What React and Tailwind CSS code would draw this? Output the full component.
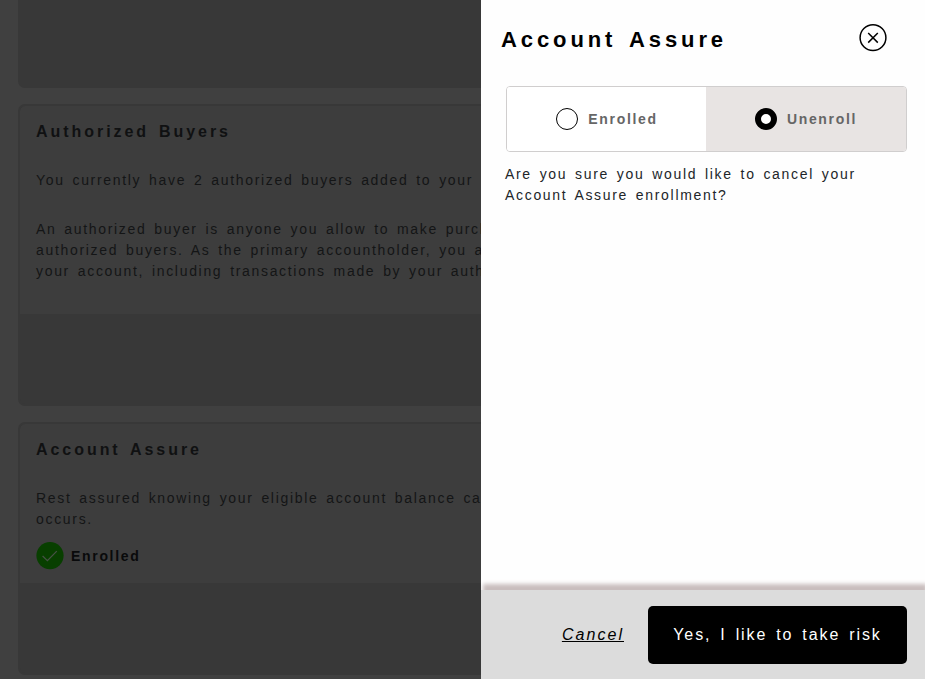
const sections = [
  {
    title: "Authorized Buyers",
    height: "h-[302px]",
    bodyHeight: "h-[208px]",
    paragraphs: [
      ["You currently have 2 authorized buyers added to your"],
      [
        "An authorized buyer is anyone you allow to make purch",
        "authorized buyers. As the primary accountholder, you a",
        "your account, including transactions made by your auth",
      ],
    ],
  },
  {
    title: "Account Assure",
    height: "h-[253px]",
    bodyHeight: "h-[159px]",
    paragraphs: [["Rest assured knowing your eligible account balance ca", "occurs."]],
    enrolled: true,
  },
];

function Section({ section }) {
  return (
    <section className={`${section.height} w-[600px] shrink-0 overflow-hidden rounded-[7px] border-2 border-[#383838] bg-[#383838]`}>
      <div className={`${section.bodyHeight} rounded-t-[5px] bg-[#3d3d3d] px-4 pt-[14px]`}>
        <h2 className="text-[16px] leading-6 font-bold tracking-[2.95px] text-[#101112] [word-spacing:2.56px]">{section.title}</h2>
        <div className="mt-[26px] flex flex-col gap-7">
          {section.paragraphs.map((lines) => (
            <p key={lines[0]}>
              {lines.map((line) => (
                <span key={line} className="block whitespace-nowrap">{line}</span>
              ))}
            </p>
          ))}
        </div>
        {section.enrolled && (
          <div className="mt-3 flex items-center gap-[7px] font-bold text-[#090a0b]">
            <svg width="28" height="28" viewBox="0 0 28 28" fill="none">
              <circle cx="14" cy="13.6" r="13.6" fill="#083f00" />
              <path d="M6.6 14 11.4 18.7 20.8 9.1" stroke="#465044" strokeWidth="1.3" />
            </svg>
            <span>Enrolled</span>
          </div>
        )}
      </div>
    </section>
  );
}

function Option({ label, selected }) {
  return (
    <label className={`flex items-center justify-center gap-[10px] font-bold text-[#666] ${selected ? "w-[200px] bg-[#e8e4e3]" : "w-[199px] bg-white pl-px"}`}>
      <span className={`size-[22px] rounded-full border-black bg-white ${selected ? "border-[6px]" : "border"}`} />
      <span>{label}</span>
    </label>
  );
}

export default function App() {
  return (
    <div className="flex h-[679px] w-[925px] overflow-hidden bg-[#404040] font-['Liberation_Sans',Arial,sans-serif] text-[14px] leading-[21px] tracking-[0.12em] [word-spacing:0.16em]">
      <main className="flex w-[481px] shrink-0 flex-col gap-4 overflow-hidden pl-[18px] text-[#141516]">
        <div className="h-[88px] w-[600px] shrink-0 rounded-b-[7px] bg-[#383838]" />
        {sections.map((section) => (
          <Section key={section.title} section={section} />
        ))}
      </main>
      <aside className="flex w-[444px] shrink-0 flex-col overflow-hidden bg-[#fefefe] text-[#212529]">
        <header className="flex h-[86px] items-start justify-between pt-6 pr-[38px] pl-5">
          <h1 className="mt-px text-[22px] leading-[30px] font-bold tracking-[3.9px] text-black [word-spacing:3.52px]">Account Assure</h1>
          <button aria-label="Close">
            <svg width="28" height="28" viewBox="0 0 28 28" fill="none" stroke="#000" strokeWidth="1.5">
              <circle cx="14" cy="13.7" r="12.9" />
              <path d="m9.2 9 9.6 9.6M18.8 9l-9.6 9.6" />
            </svg>
          </button>
        </header>
        <div className="ml-[25px] flex h-[66px] w-[401px] overflow-hidden rounded-[4px] border border-[#d0cece]">
          <Option label="Enrolled" />
          <Option label="Unenroll" selected />
        </div>
        <p className="mt-3 ml-6 w-[380px]">
          Are you sure you would like to cancel your
          <br />
          Account Assure enrollment?
        </p>
        <footer className="mt-auto flex h-[89px] items-center justify-end gap-6 bg-[#dcdcdc] pr-[18px] text-[16px] shadow-[2px_-6px_4px_0_#c9bebe]">
          <a className="tracking-[2.05px] text-black italic underline">Cancel</a>
          <button className="mt-px h-[58px] w-[259px] rounded-[5px] bg-black pb-[2px] tracking-[0.12em] text-white [word-spacing:0.16em]">
            Yes, I like to take risk
          </button>
        </footer>
      </aside>
    </div>
  );
}
